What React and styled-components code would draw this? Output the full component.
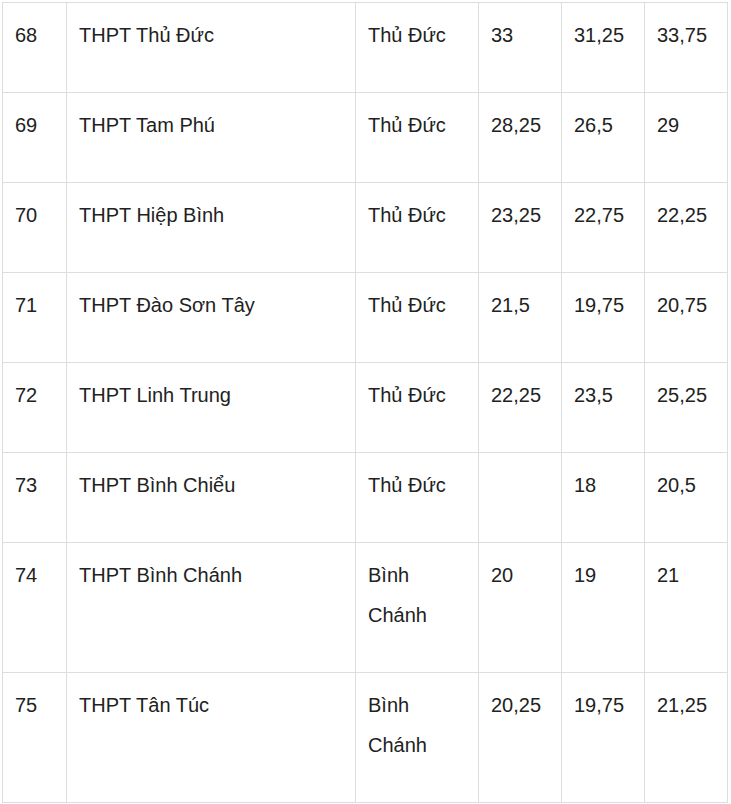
import React from "react";
import styled, { createGlobalStyle } from "styled-components";

const rows = [
  ["68", "THPT Thủ Đức", "Thủ Đức", "33", "31,25", "33,75"],
  ["69", "THPT Tam Phú", "Thủ Đức", "28,25", "26,5", "29"],
  ["70", "THPT Hiệp Bình", "Thủ Đức", "23,25", "22,75", "22,25"],
  ["71", "THPT Đào Sơn Tây", "Thủ Đức", "21,5", "19,75", "20,75"],
  ["72", "THPT Linh Trung", "Thủ Đức", "22,25", "23,5", "25,25"],
  ["73", "THPT Bình Chiểu", "Thủ Đức", "", "18", "20,5"],
  ["74", "THPT Bình Chánh", "Bình Chánh", "20", "19", "21"],
  ["75", "THPT Tân Túc", "Bình Chánh", "20,25", "19,75", "21,25"],
];

const colWidths = [64, 289, 123, 83, 83, 83];

const GlobalStyle = createGlobalStyle`
  body {
    margin: 0;
    background: #fff;
    font-family: "Liberation Sans", Arial, sans-serif;
  }
`;

const Wrapper = styled.div`
  padding: 2px 0 0 2px;
`;

const ScoreTable = styled.table`
  border-collapse: collapse;
  table-layout: fixed;
  width: 725px;
  color: #222;
`;

const Cell = styled.td`
  border: 1px solid #ddd;
  padding: 12px 12px 37px;
  vertical-align: top;
  font-size: 20px;
  line-height: 40px;
`;

const App = () => {
  return (
    <Wrapper>
      <GlobalStyle />
      <ScoreTable>
        <colgroup>
          {colWidths.map((w, i) => (
            <col key={i} style={{ width: w }} />
          ))}
        </colgroup>
        <tbody>
          {rows.map((row) => (
            <tr key={row[0]}>
              {row.map((value, i) => (
                <Cell key={i}>{value}</Cell>
              ))}
            </tr>
          ))}
        </tbody>
      </ScoreTable>
    </Wrapper>
  );
};

export default App;
